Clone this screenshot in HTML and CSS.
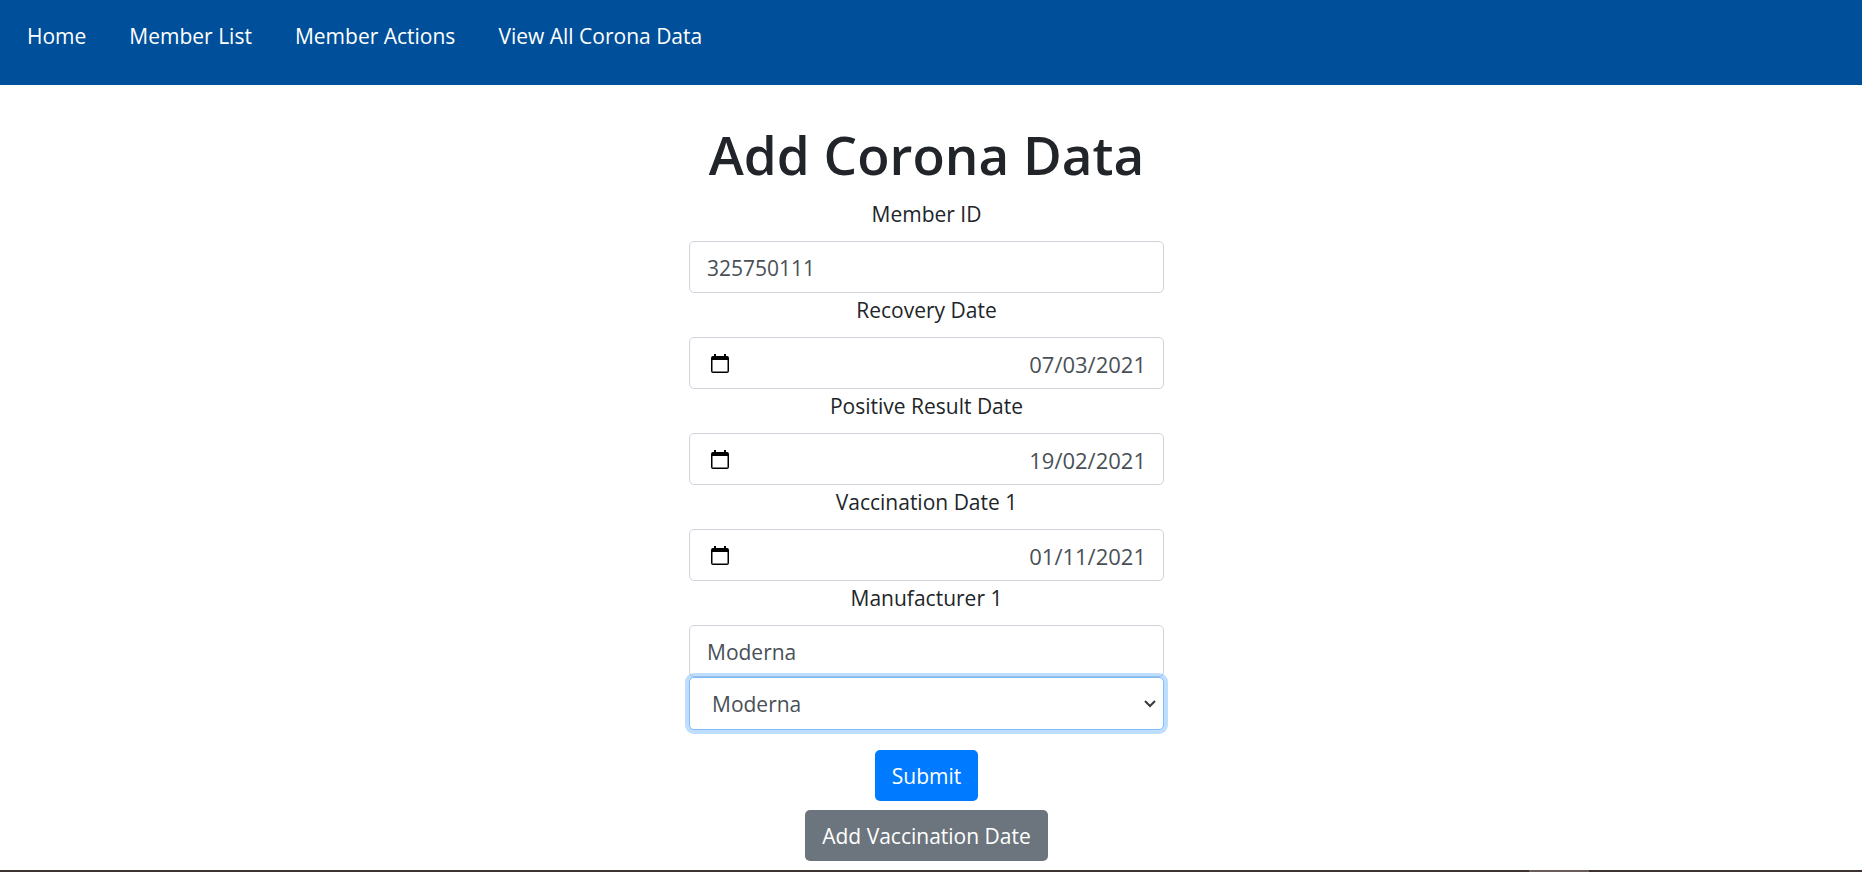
FILE: index.html
```html
<!DOCTYPE html>
<html lang="en">
<head>
<meta charset="utf-8">
<title>Add Corona Data</title>
<link rel="stylesheet" href="styles.css">
</head>
<body>
<nav class="navbar">
  <a class="nav-link" href="#home">Home</a>
  <a class="nav-link" href="#members">Member List</a>
  <a class="nav-link" href="#actions">Member Actions</a>
  <a class="nav-link" href="#corona">View All Corona Data</a>
</nav>
<main class="content">
  <h1 class="title">Add Corona Data</h1>
  <form class="form">
    <label class="label" for="member-id">Member ID</label>
    <input class="control" id="member-id" type="text" value="325750111">

    <label class="label" for="recovery">Recovery Date</label>
    <div class="control date">
      <button class="picker" type="button" aria-label="Choose recovery date"><svg class="calendar" viewBox="0 0 18 20"><path fill-rule="evenodd" d="M3 0h2v2h8V0h2v2h1q2 0 2 2v13q0 2-2 2H2q-2 0-2-2V4q0-2 2-2h1zM1.500 6v11.500h15V6z"/></svg></button>
      <input class="date-value" id="recovery" type="text" value="07/03/2021">
    </div>

    <label class="label" for="positive">Positive Result Date</label>
    <div class="control date">
      <button class="picker" type="button" aria-label="Choose positive result date"><svg class="calendar" viewBox="0 0 18 20"><path fill-rule="evenodd" d="M3 0h2v2h8V0h2v2h1q2 0 2 2v13q0 2-2 2H2q-2 0-2-2V4q0-2 2-2h1zM1.500 6v11.500h15V6z"/></svg></button>
      <input class="date-value" id="positive" type="text" value="19/02/2021">
    </div>

    <label class="label" for="vaccination">Vaccination Date 1</label>
    <div class="control date">
      <button class="picker" type="button" aria-label="Choose vaccination date"><svg class="calendar" viewBox="0 0 18 20"><path fill-rule="evenodd" d="M3 0h2v2h8V0h2v2h1q2 0 2 2v13q0 2-2 2H2q-2 0-2-2V4q0-2 2-2h1zM1.500 6v11.500h15V6z"/></svg></button>
      <input class="date-value" id="vaccination" type="text" value="01/11/2021">
    </div>

    <label class="label" for="manufacturer">Manufacturer 1</label>
    <input class="control" id="manufacturer" type="text" value="Moderna">
    <div class="select-wrap">
      <select class="control select" aria-label="Manufacturer">
        <option>Moderna</option>
      </select>
      <svg class="chevron" viewBox="0 0 12 8"><path d="M1 1l5 5 5-5"/></svg>
    </div>
    <div class="actions">
      <button class="btn primary" type="submit">Submit</button>
      <button class="btn secondary" type="button">Add Vaccination Date</button>
    </div>
  </form>
</main>
<footer class="edge"><div class="edge-mark"></div></footer>
</body>
</html>
```
FILE: styles.css
```css
* { box-sizing: border-box; }

body {
  margin: 0;
  min-height: 100vh;
  display: flex;
  flex-direction: column;
  background: #fff;
  color: #212529;
  font: 21px/33px "Segoe UI", "Open Sans", "Noto Sans", sans-serif;
}

input, select, button { font: inherit; }

.navbar {
  display: flex;
  gap: 43px;
  padding: 20px 27px 32px;
  background: #004f9a;
}
.nav-link { color: #fff; text-decoration: none; }

.content {
  flex: 1;
  padding: 37px 9px 8px 0;
  display: flex;
  flex-direction: column;
  align-items: center;
}
.title {
  margin: 0 0 9px;
  font-size: 53px;
  line-height: 66px;
  font-weight: 600;
}
.form {
  width: 475px;
  max-width: 100%;
  display: flex;
  flex-direction: column;
}
.label {
  margin-bottom: 9px;
  line-height: 35px;
  text-align: center;
}

.control {
  width: 100%;
  height: 52px;
  padding: 9px 17px 7px;
  border: 1px solid #ced4da;
  border-radius: 5px;
  background: #fff;
  color: #495057;
}
.date {
  display: flex;
  align-items: center;
  justify-content: space-between;
}
.picker {
  display: flex;
  padding: 0 4px;
  border: 0;
  background: none;
}
.calendar { width: 18px; height: 20px; fill: #000; }
.date-value {
  width: 200px;
  padding: 0;
  border: 0;
  background: none;
  color: inherit;
  font-size: 22px;
  text-align: right;
}

.select-wrap { position: relative; display: flex; }
.select {
  height: 53px;
  appearance: none;
  padding: 9px 22px 7px;
  border-color: #80bdff;
  box-shadow: 0 0 0 4px rgba(0, 123, 255, 0.25);
}
.chevron {
  position: absolute;
  top: 23px;
  right: 8px;
  width: 12px;
  height: 8px;
  fill: none;
  stroke: #343a40;
  stroke-width: 2;
  pointer-events: none;
}

.actions {
  margin-top: 20px;
  display: flex;
  flex-direction: column;
  align-items: center;
  gap: 9px;
}
.btn {
  padding: 10px 17px 8px;
  border: 0;
  border-radius: 5px;
  color: #fff;
}
.primary { background: #007bff; }
.secondary { background: #6c757d; }

.edge {
  height: 2px;
  padding-right: 273px;
  display: flex;
  justify-content: flex-end;
  background: #3c3232;
}
.edge-mark { width: 60px; background: #6b5c5c; }
```
